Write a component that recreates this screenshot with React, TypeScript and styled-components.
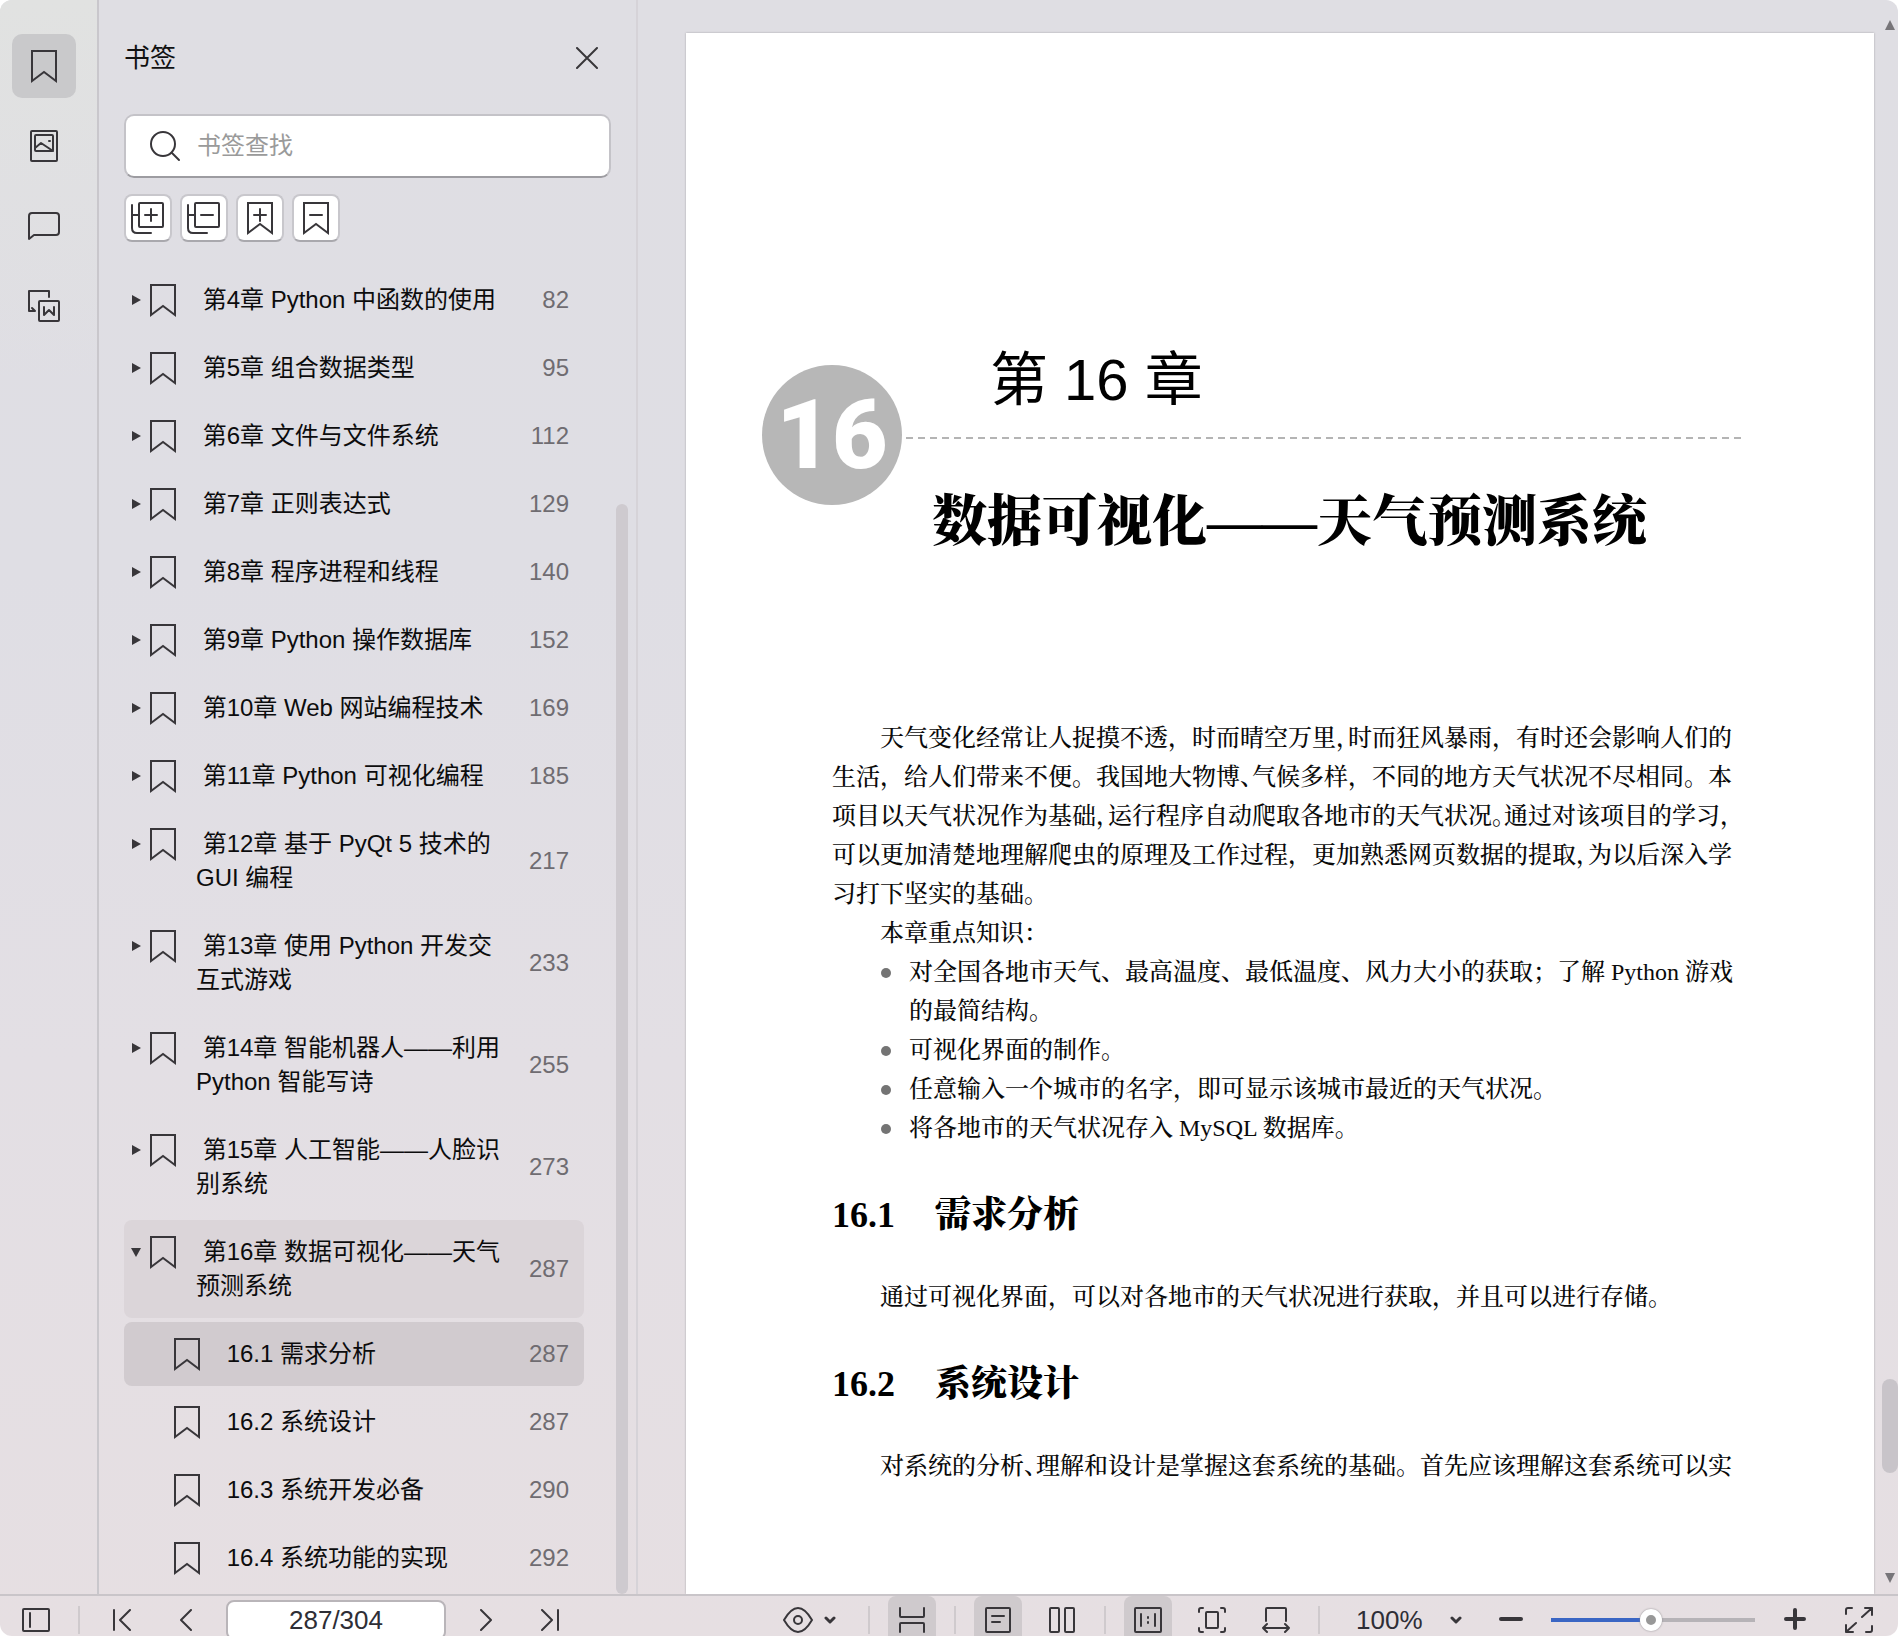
import React from "react";
import styled, { createGlobalStyle } from "styled-components";

const ui = `"Liberation Sans", "Noto Sans CJK SC", sans-serif`;
const song = `"Liberation Serif", "Noto Serif CJK SC", "Noto Sans CJK SC", serif`;
const ink = "#38363a";

const GlobalStyle = createGlobalStyle`
  *, *::before, *::after { box-sizing: border-box; }
  body { margin: 0; background: #fff; font-family: ${ui}; color: #111; }
  button { border: 0; padding: 0; background: none; color: inherit; font: inherit; cursor: pointer; }
  a { color: inherit; text-decoration: none; }
  ul { list-style: none; margin: 0; padding: 0; }
  h1, h2, p { margin: 0; }
`;

const Window = styled.div`
  display: flex;
  flex-direction: column;
  height: 100vh;
  border-radius: 12px;
  overflow: hidden;
  background: linear-gradient(180deg, #dfdee3 0%, #dfdee4 35%, #e3dfe4 65%, #e6dfe2 100%);
`;

const Workspace = styled.div`
  display: flex;
  flex: 1;
  min-height: 0;
`;

const Rail = styled.nav`
  display: flex;
  flex-direction: column;
  align-items: center;
  gap: 16px;
  flex: none;
  width: 99px;
  padding: 34px 10px 0 0;
  border-right: 2px solid #c9c7cc;
  background: linear-gradient(180deg, #e1e2e1 0%, rgba(225, 226, 225, 0) 24%);
`;

const RailButton = styled.button<{ $active?: boolean }>`
  display: grid;
  place-items: center;
  width: 64px;
  height: 64px;
  border-radius: 10px;
  background: ${(p) => (p.$active ? "#c9c9cb" : "transparent")};
`;

const Panel = styled.aside`
  display: flex;
  flex: none;
  width: 539px;
  border-right: 2px solid #d6d3d8;
`;

const PanelMain = styled.div`
  display: flex;
  flex-direction: column;
  flex: 1;
  min-width: 0;
  padding: 34px 5px 0 25px;
`;

const PanelHead = styled.header`
  display: flex;
  align-items: center;
  justify-content: space-between;
  height: 48px;
`;

const PanelTitle = styled.h2`
  font-size: 26px;
  font-weight: 400;
  line-height: 34px;
`;

const CloseButton = styled.button`
  display: grid;
  place-items: center;
  width: 48px;
  height: 48px;
`;

const Search = styled.label`
  display: flex;
  align-items: center;
  gap: 16px;
  height: 64px;
  margin-top: 32px;
  padding: 0 23px;
  border: 2px solid #c4c3c8;
  border-bottom-color: #9d9ca1;
  border-radius: 10px;
  background: #fff;

  input {
    flex: 1;
    min-width: 0;
    border: 0;
    outline: 0;
    padding: 0;
    background: none;
    font: 24px/34px ${ui};
  }
  input::placeholder { color: #9a9a9a; opacity: 1; }
`;

const Tools = styled.div`
  display: flex;
  gap: 8px;
  margin-top: 16px;
`;

const ToolButton = styled.button`
  display: grid;
  place-items: center;
  width: 48px;
  height: 48px;
  border: 2px solid #c8c7cc;
  border-bottom-color: #a9a8ad;
  border-radius: 8px;
  background: #fff;
`;

const Tree = styled.ul`
  flex: 1;
  min-height: 0;
  overflow: hidden;
  margin: 26px 27px 0 0;
`;

const Node = styled.li<{ $depth: number; $tone?: string }>`
  display: flex;
  align-items: flex-start;
  margin-bottom: 4px;
  padding-left: ${(p) => (p.$depth ? 50 : 6)}px;
  border-radius: 8px;
  background: ${(p) => p.$tone ?? "transparent"};
`;

const Toggle = styled.button`
  display: grid;
  place-items: center;
  flex: none;
  width: 12px;
  height: 64px;
  margin-right: 8px;
`;

const NodeLink = styled.a`
  display: flex;
  align-items: flex-start;
  flex: 1;
  min-width: 0;
  padding: 15px 15px 15px 0;
  font-size: 24px;
  line-height: 34px;
  color: #0c0c0d;

  svg { flex: none; }
`;

const NodeText = styled.span`
  flex: 1;
  margin-left: 20px;
`;

const NodePage = styled.span`
  flex: none;
  align-self: center;
  width: 60px;
  text-align: right;
  color: #6f6c71;
`;

const PanelTrack = styled.div`
  display: flex;
  flex-direction: column;
  width: 12px;
  margin-right: 8px;

  &::before { content: ""; flex: 504; }
`;

const PanelThumb = styled.div`
  flex: 1090;
  border-radius: 6px;
  background: #cecacf;
`;

const Reader = styled.main`
  display: flex;
  flex: 1;
  min-width: 0;
  padding: 33px 0 0 48px;
`;

const Page = styled.article`
  flex: 1;
  min-width: 0;
  overflow: hidden;
  padding-top: 315px;
  background: #fff;
  box-shadow: 0 0 2px #a5a4a8;
  font-family: ${song};
  font-size: 24px;
  font-weight: 500;
  line-height: 39px;
  color: #0a0a0a;
`;

const ChapterHead = styled.header`
  display: flex;
  align-items: flex-start;
  gap: 4px;
  margin: 0 133px 0 76px;
`;

const ChapterBadge = styled.div`
  display: grid;
  place-items: center;
  flex: none;
  width: 140px;
  height: 140px;
  margin-top: 17px;
  border-radius: 50%;
  background: #b7b7b7;
  color: #fff;
  font: 900 96px/140px Roboto, sans-serif;
`;

const ChapterNames = styled.div`
  flex: 1;
  min-width: 0;
`;

const ChapterNumber = styled.p`
  padding-left: 84px;
  font-family: ${ui};
  font-size: 58px;
  font-weight: 400;
  line-height: 64px;
  color: #000;
`;

const DashedRule = styled.div`
  height: 2px;
  margin: 25px 0 51px;
  background: repeating-linear-gradient(90deg, #b4b4b4 0 7px, transparent 7px 12px);
`;

const ChapterTitle = styled.h1`
  padding-left: 26px;
  font-family: ${song};
  font-size: 55px;
  font-weight: 900;
  line-height: 64px;
  white-space: nowrap;
  color: #000;
`;

const Body = styled.div`
  margin: 165px 141px 0 146px;
`;

const Paragraph = styled.p`
  text-indent: 2em;
`;

const Line = styled.span`
  display: block;

  & + & { text-indent: 0; }
`;

const Half = styled.span`
  font-feature-settings: "halt";
`;

const Points = styled.ul`
  padding-left: 49px;
`;

const Point = styled.li`
  display: flex;

  &::before {
    content: "";
    flex: none;
    width: 10px;
    height: 10px;
    margin: 15px 18px 0 0;
    border-radius: 50%;
    background: #747474;
  }
`;

const SectionTitle = styled.h2`
  display: flex;
  gap: 40px;
  margin: 43px 0 39px;
  font-size: 36px;
  font-weight: 900;
  line-height: 48px;
  color: #000;
`;

const Gutter = styled.div`
  display: flex;
  flex-direction: column;
  align-items: flex-end;
  flex: none;
  width: 24px;
  margin: -16px 0 8px;
`;

const ArrowButton = styled.button`
  display: grid;
  place-items: center;
  width: 16px;
  height: 16px;
`;

const GutterTrack = styled.div`
  display: flex;
  flex-direction: column;
  flex: 1;
  width: 16px;

  &::before { content: ""; flex: 1346; }
  &::after { content: ""; flex: 97; }
`;

const GutterThumb = styled.div`
  flex: 94;
  border-radius: 8px;
  background: #c8c4c9;
`;

const StatusBar = styled.footer`
  flex: none;
  height: 42px;
  overflow: hidden;
  border-top: 2px solid #c9c5c9;
`;

const StatusRow = styled.div`
  display: flex;
  align-items: center;
  gap: 16px;
  height: 48px;
  padding: 0 15px 0 12px;
`;

const StatusButton = styled.button<{ $active?: boolean; $wide?: boolean }>`
  display: flex;
  align-items: center;
  justify-content: center;
  gap: 10px;
  flex: none;
  width: ${(p) => (p.$wide ? 82 : 48)}px;
  height: 48px;
  border-radius: 8px;
  background: ${(p) => (p.$active ? "#cfcacd" : "transparent")};
`;

const Divider = styled.span`
  flex: none;
  width: 2px;
  height: 28px;
  margin: 0 2px;
  background: #cfcacd;
`;

const Spacer = styled.span`
  flex: 1;
`;

const PageBox = styled.input`
  flex: none;
  width: 220px;
  height: 40px;
  padding: 0;
  border: 2px solid #b9b5b9;
  border-radius: 8px;
  background: #fff;
  font: 26px/34px ${ui};
  text-align: center;
  color: #2e2e36;
`;

const ZoomPicker = styled.label`
  display: flex;
  align-items: center;
  flex: none;

  select {
    appearance: none;
    width: 112px;
    height: 40px;
    padding: 0 0 0 18px;
    border: 0;
    background: none;
    font: 26px/40px ${ui};
    color: #2e2e36;
  }
  svg { margin: 0 9px 0 0; }
`;

const ZoomRange = styled.input`
  appearance: none;
  flex: none;
  width: 204px;
  height: 24px;
  margin: 0;
  background: linear-gradient(90deg, #3a66c4 50%, #b6b3b7 50%) center / 100% 4px no-repeat;

  &::-webkit-slider-thumb {
    appearance: none;
    width: 22px;
    height: 22px;
    border-radius: 50%;
    border: 6px solid #fff;
    background: #989898;
    box-shadow: 0 0 2px #8a878b;
  }
`;

type IconProps = { w?: number; h?: number; sw?: number; children: React.ReactNode };
const Icon = ({ w = 32, h = 32, sw = 2, children }: IconProps) => (
  <svg
    width={w}
    height={h}
    viewBox={`0 0 ${w} ${h}`}
    fill="none"
    stroke={ink}
    strokeWidth={sw}
    strokeLinecap="round"
    strokeLinejoin="round"
    aria-hidden="true"
  >
    {children}
  </svg>
);

const Bookmark = ({ children }: { children?: React.ReactNode }) => (
  <Icon w={26} h={34}>
    <path d="M1 2h24v30l-12-9-12 9z" strokeLinejoin="miter" />
    {children}
  </Icon>
);

const Stack = ({ plus }: { plus?: boolean }) => (
  <Icon w={34} h={34}>
    <rect x="8" y="2" width="24" height="24" rx="1" />
    <path d="M1 4v23q0 5 5 5h14M1 14h7M14 14h12" />
    {plus && <path d="M20 8v12" />}
  </Icon>
);

const Chevron = () => (
  <Icon w={12} h={10} sw={3}>
    <path d="M2 3l4 4 4-4" />
  </Icon>
);

type Entry = { id: string; text: string; page: number; depth?: number; open?: boolean; tone?: string };
const entries: Entry[] = [
  { id: "4", text: "第4章 Python 中函数的使用", page: 82 },
  { id: "5", text: "第5章 组合数据类型", page: 95 },
  { id: "6", text: "第6章 文件与文件系统", page: 112 },
  { id: "7", text: "第7章 正则表达式", page: 129 },
  { id: "8", text: "第8章 程序进程和线程", page: 140 },
  { id: "9", text: "第9章 Python 操作数据库", page: 152 },
  { id: "10", text: "第10章 Web 网站编程技术", page: 169 },
  { id: "11", text: "第11章 Python 可视化编程", page: 185 },
  { id: "12", text: "第12章 基于 PyQt 5 技术的 GUI 编程", page: 217 },
  { id: "13", text: "第13章 使用 Python 开发交互式游戏", page: 233 },
  { id: "14", text: "第14章 智能机器人——利用 Python 智能写诗", page: 255 },
  { id: "15", text: "第15章 人工智能——人脸识别系统", page: 273 },
  { id: "16", text: "第16章 数据可视化——天气预测系统", page: 287, open: true, tone: "#dbd5d9" },
  { id: "16-1", text: "16.1 需求分析", page: 287, depth: 1, tone: "#d1cbcf" },
  { id: "16-2", text: "16.2 系统设计", page: 287, depth: 1 },
  { id: "16-3", text: "16.3 系统开发必备", page: 290, depth: 1 },
  { id: "16-4", text: "16.4 系统功能的实现", page: 292, depth: 1 },
];

const BookmarkNode = ({ entry }: { entry: Entry }) => (
  <Node $depth={entry.depth ?? 0} $tone={entry.tone}>
    {!entry.depth && (
      <Toggle aria-label={entry.open ? "折叠" : "展开"} aria-expanded={!!entry.open}>
        <svg width="12" height="12" viewBox="0 0 12 12" fill={ink} aria-hidden="true">
          {entry.open ? <path d="M1 2h10L6 11z" /> : <path d="M2 1v10l9-5z" />}
        </svg>
      </Toggle>
    )}
    <NodeLink href={`#section-${entry.id}`}>
      <Bookmark />
      <NodeText>{"\u00a0" + entry.text}</NodeText>
      <NodePage>{entry.page}</NodePage>
    </NodeLink>
  </Node>
);

export default function App() {
  return (
    <Window lang="zh-CN">
      <GlobalStyle />
      <Workspace>
        <Rail aria-label="侧边栏">
          <RailButton $active aria-label="书签">
            <Bookmark />
          </RailButton>
          <RailButton aria-label="缩略图">
            <Icon>
              <rect x="3" y="1" width="26" height="30" rx="1" />
              <rect x="7" y="5" width="18" height="16" rx="1" />
              <path d="M7 18l6-5 12 8M21 11h1" />
            </Icon>
          </RailButton>
          <RailButton aria-label="批注">
            <Icon>
              <path d="M1 29V6q0-3 3-3h24q3 0 3 3v16q0 3-3 3H6z" />
            </Icon>
          </RailButton>
          <RailButton aria-label="转换">
            <Icon w={34} h={34}>
              <path d="M22 8V2H2v20h6l-3-3" />
              <rect x="12" y="12" width="20" height="20" rx="1" />
              <path d="M17 18v8l5-5 5 5v-8" />
            </Icon>
          </RailButton>
        </Rail>

        <Panel>
          <PanelMain>
            <PanelHead>
              <PanelTitle>书签</PanelTitle>
              <CloseButton aria-label="关闭">
                <Icon w={22} h={22}>
                  <path d="M1 1l20 20M21 1L1 21" />
                </Icon>
              </CloseButton>
            </PanelHead>
            <Search>
              <Icon>
                <circle cx="14" cy="14" r="12" />
                <path d="M23 23l7 7" />
              </Icon>
              <input type="text" placeholder="书签查找" aria-label="书签查找" />
            </Search>
            <Tools>
              <ToolButton aria-label="全部展开">
                <Stack plus />
              </ToolButton>
              <ToolButton aria-label="全部折叠">
                <Stack />
              </ToolButton>
              <ToolButton aria-label="添加书签">
                <Bookmark>
                  <path d="M7 14h12M13 8v12" />
                </Bookmark>
              </ToolButton>
              <ToolButton aria-label="删除书签">
                <Bookmark>
                  <path d="M7 14h12" />
                </Bookmark>
              </ToolButton>
            </Tools>
            <Tree>
              {entries.map((entry) => (
                <BookmarkNode key={entry.id} entry={entry} />
              ))}
            </Tree>
          </PanelMain>
          <PanelTrack>
            <PanelThumb />
          </PanelTrack>
        </Panel>

        <Reader>
          <Page>
            <ChapterHead>
              <ChapterBadge>16</ChapterBadge>
              <ChapterNames>
                <ChapterNumber>第 16 章</ChapterNumber>
                <DashedRule />
                <ChapterTitle>数据可视化——天气预测系统</ChapterTitle>
              </ChapterNames>
            </ChapterHead>
            <Body>
              <Paragraph>
                <Line>
                  天气变化经常让人捉摸不透，时而晴空万里<Half>，</Half>时而狂风暴雨，有时还会影响人们的
                </Line>
                <Line>
                  生活，给人们带来不便。我国地大物博<Half>、</Half>气候多样，不同的地方天气状况不尽相同。本
                </Line>
                <Line>
                  项目以天气状况作为基础<Half>，</Half>运行程序自动爬取各地市的天气状况<Half>。</Half>通过对该项目的学习<Half>，</Half>
                </Line>
                <Line>
                  可以更加清楚地理解爬虫的原理及工作过程，更加熟悉网页数据的提取<Half>，</Half>为以后深入学
                </Line>
                <Line>习打下坚实的基础。</Line>
              </Paragraph>
              <Paragraph>本章重点知识：</Paragraph>
              <Points>
                <Point>
                  <span>对全国各地市天气、最高温度、最低温度、风力大小的获取；了解 Python 游戏的最简结构。</span>
                </Point>
                <Point>
                  <span>可视化界面的制作。</span>
                </Point>
                <Point>
                  <span>任意输入一个城市的名字，即可显示该城市最近的天气状况。</span>
                </Point>
                <Point>
                  <span>将各地市的天气状况存入 MySQL 数据库。</span>
                </Point>
              </Points>
              <SectionTitle>
                <span>16.1</span>
                <span>需求分析</span>
              </SectionTitle>
              <Paragraph>通过可视化界面，可以对各地市的天气状况进行获取，并且可以进行存储。</Paragraph>
              <SectionTitle>
                <span>16.2</span>
                <span>系统设计</span>
              </SectionTitle>
              <Paragraph>
                对系统的分析<Half>、</Half>理解和设计是掌握这套系统的基础。首先应该理解这套系统可以实
              </Paragraph>
            </Body>
          </Page>
          <Gutter>
            <ArrowButton aria-label="向上滚动">
              <svg width="10" height="10" viewBox="0 0 10 10" fill="#777579" aria-hidden="true">
                <path d="M0 10h10L5 0z" />
              </svg>
            </ArrowButton>
            <GutterTrack>
              <GutterThumb />
            </GutterTrack>
            <ArrowButton aria-label="向下滚动">
              <svg width="10" height="10" viewBox="0 0 10 10" fill="#777579" aria-hidden="true">
                <path d="M0 0h10L5 10z" />
              </svg>
            </ArrowButton>
          </Gutter>
        </Reader>
      </Workspace>

      <StatusBar>
        <StatusRow>
          <StatusButton aria-label="侧栏">
            <Icon w={28} h={26}>
              <rect x="1" y="2" width="26" height="22" rx="1" />
              <path d="M8 6v14" />
            </Icon>
          </StatusButton>
          <Divider />
          <StatusButton aria-label="首页">
            <Icon w={18} h={22}>
              <path d="M1 1v20M17 1L7 11l10 10" />
            </Icon>
          </StatusButton>
          <StatusButton aria-label="上一页">
            <Icon w={12} h={22}>
              <path d="M11 1L1 11l10 10" />
            </Icon>
          </StatusButton>
          <PageBox type="text" defaultValue="287/304" aria-label="页码" />
          <StatusButton aria-label="下一页">
            <Icon w={12} h={22}>
              <path d="M1 1l10 10L1 21" />
            </Icon>
          </StatusButton>
          <StatusButton aria-label="末页">
            <Icon w={18} h={22}>
              <path d="M17 1v20M1 1l10 10L1 21" />
            </Icon>
          </StatusButton>
          <Spacer />
          <StatusButton $wide aria-label="阅读模式">
            <Icon w={32} h={26}>
              <path d="M2 13Q9 1 16 1t14 12Q23 25 16 25T2 13z" />
              <circle cx="16" cy="13" r="4" />
            </Icon>
            <Chevron />
          </StatusButton>
          <Divider />
          <StatusButton $active aria-label="连续阅读">
            <Icon w={26} h={28}>
              <path d="M1 2v8q0 1 1 1h22q1 0 1-1V2M1 26v-8q0-1 1-1h22q1 0 1 1v8" />
            </Icon>
          </StatusButton>
          <Divider />
          <StatusButton $active aria-label="单页">
            <Icon w={26} h={28}>
              <rect x="1" y="2" width="24" height="24" rx="1" />
              <path d="M7 10h12M7 16h8" />
            </Icon>
          </StatusButton>
          <StatusButton aria-label="双页">
            <Icon w={26} h={28}>
              <rect x="1" y="2" width="9" height="24" rx="1" />
              <rect x="16" y="2" width="9" height="24" rx="1" />
            </Icon>
          </StatusButton>
          <Divider />
          <StatusButton $active aria-label="实际大小">
            <Icon w={28} h={28}>
              <rect x="1" y="2" width="26" height="24" rx="1" />
              <path d="M7 8v12M21 8v12M14 11v1M14 16v1" />
            </Icon>
          </StatusButton>
          <StatusButton aria-label="适合页面">
            <Icon w={28} h={28}>
              <path d="M1 6V4q0-2 2-2h2M23 2h2q2 0 2 2v2M27 22v2q0 2-2 2h-2M5 26H3q-2 0-2-2v-2" />
              <rect x="8" y="6" width="12" height="16" rx="1" />
            </Icon>
          </StatusButton>
          <StatusButton aria-label="适合宽度">
            <Icon w={28} h={28}>
              <path d="M4 15V3q0-1 1-1h18q1 0 1 1v12M1 22h26M5 18l-4 4 4 4M23 18l4 4-4 4" />
            </Icon>
          </StatusButton>
          <Divider />
          <ZoomPicker>
            <select defaultValue="100%" aria-label="缩放比例">
              <option>50%</option>
              <option>100%</option>
              <option>200%</option>
            </select>
            <Chevron />
          </ZoomPicker>
          <StatusButton aria-label="缩小">
            <Icon w={26} h={26} sw={4}>
              <path d="M3 12h20" />
            </Icon>
          </StatusButton>
          <ZoomRange type="range" min="0" max="100" defaultValue="49" aria-label="缩放" />
          <StatusButton aria-label="放大">
            <Icon w={22} h={24} sw={4}>
              <path d="M2 11h18M11 2v18" />
            </Icon>
          </StatusButton>
          <StatusButton aria-label="全屏">
            <Icon w={28} h={28}>
              <path d="M1 8V4q0-2 2-2h4M17 11l10-9M20 2h7v7M11 17L1 26M1 19v7h7M27 20v4q0 2-2 2h-4" />
            </Icon>
          </StatusButton>
        </StatusRow>
      </StatusBar>
    </Window>
  );
}
